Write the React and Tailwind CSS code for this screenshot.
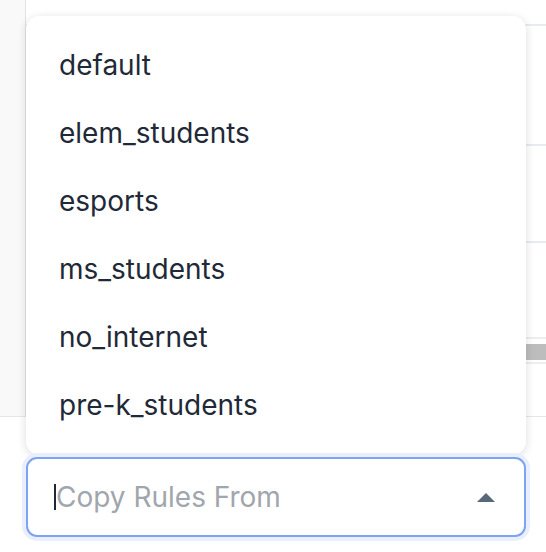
import React from 'react';

const options = ['default', 'elem_students', 'esports', 'ms_students', 'no_internet', 'pre-k_students'];

export default function App() {
  return (
    <div className="relative w-[546px] h-[552px] overflow-hidden bg-white" style={{ fontFamily: 'Inter, "Noto Sans", sans-serif' }}>
      {/* page behind the menu */}
      <div className="flex h-[417px] border-b border-[#e5e7eb]">
        <div className="w-[26px] shrink-0 bg-[#f9f9f9] border-r border-[#e3e3e3]" />
        <div className="flex-1 flex flex-col">
          <div className="h-[26px] border-b-2 border-[#e8ecf0]" />
          <div className="h-[120px] border-b-2 border-[#e8ecf0]" />
          <div className="h-[97px] border-b-2 border-[#e8ecf0]" />
          <div className="h-[96px] border-b-2 border-[#eeeeee]" />
          <div className="h-[5px]" />
          <div className="h-[16px] bg-[#bdbdbd]" />
          <div className="h-[4px] border-b-2 border-[#eeeeee]" />
          <div className="flex-1" />
        </div>
      </div>

      {/* dropdown menu */}
      <div className="absolute left-[26px] top-[16px] w-[500px] h-[439px] bg-white rounded-[14px] shadow-[0_2px_10px_rgba(0,0,0,0.14)] pt-[15px]">
        {options.map(o => (
          <div key={o} className="h-[68px] px-[33px] text-[28px] leading-[68px] text-[#1f2937]">
            {o}
          </div>
        ))}
      </div>

      {/* select input */}
      <div className="absolute left-[26px] top-[457px] w-[500px] h-[80px] rounded-[11px] border-2 border-[#7ea3f1] ring-4 ring-[#e9efff] bg-white flex items-center pl-[26px] pr-[28px]">
        <span className="w-[2px] h-[26px] bg-[#1f2937]" />
        <span className="flex-1 text-[28px] text-[#a1a6ad]">Copy Rules From</span>
        <svg width="18" height="9" viewBox="0 0 18 9" className="mr-[1px]">
          <path d="M0 9 L9 0 L18 9 Z" fill="#56687a" />
        </svg>
      </div>
    </div>
  );
}
